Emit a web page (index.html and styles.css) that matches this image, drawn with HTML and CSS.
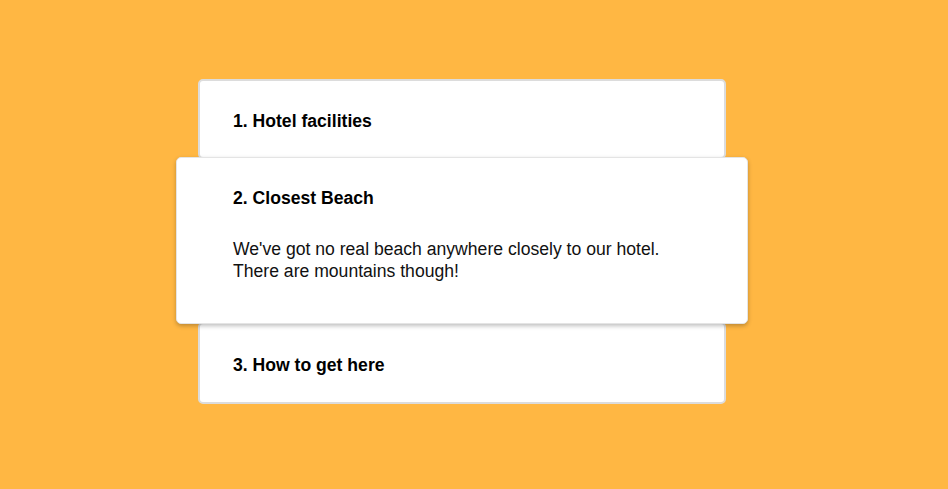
FILE: index.html
```html
<!DOCTYPE html>
<html>
<head>
<meta charset="utf-8">
<link rel="stylesheet" href="styles.css">
</head>
<body>
<div class="accordion">
  <div class="item first">
    <h3 class="title">1. Hotel facilities</h3>
  </div>
  <div class="item open">
    <h3 class="title">2. Closest Beach</h3>
    <p class="text">We've got no real beach anywhere closely to our hotel.<br>There are mountains though!</p>
  </div>
  <div class="item last">
    <h3 class="title">3. How to get here</h3>
  </div>
</div>
</body>
</html>
```
FILE: styles.css
```css
html, body {
  margin: 0;
  padding: 0;
}
body {
  background: #ffb743;
  font-family: "Liberation Sans", Arial, sans-serif;
  height: 489px;
  overflow: hidden;
}
.accordion {
  width: 528px;
  margin: 79px 0 0 198px;
  display: flex;
  flex-direction: column;
}
.item {
  background: #fff;
  border: 2px solid #dcdcdc;
  border-radius: 5px;
  padding: 31px 33px 28px;
  box-sizing: border-box;
}
.first {
  height: 80px;
  padding-top: 30px;
}
.last {
  height: 82px;
  margin-top: -2px;
}
.title {
  margin: 0;
  font-size: 17.6px;
  line-height: 20px;
  font-weight: bold;
  color: #000;
}
.open {
  position: relative;
  z-index: 1;
  margin: -2px -22px 0;
  padding: 30px 55px 0;
  height: 167px;
  border: 1px solid #e4e4e4;
  box-shadow: 0 2px 4px rgba(0, 0, 0, 0.25);
}
.open .title {
  padding-left: 1px;
}
.text {
  margin: 30px 0 0 1px;
  font-size: 17.6px;
  line-height: 22px;
  color: #111;
}
```
